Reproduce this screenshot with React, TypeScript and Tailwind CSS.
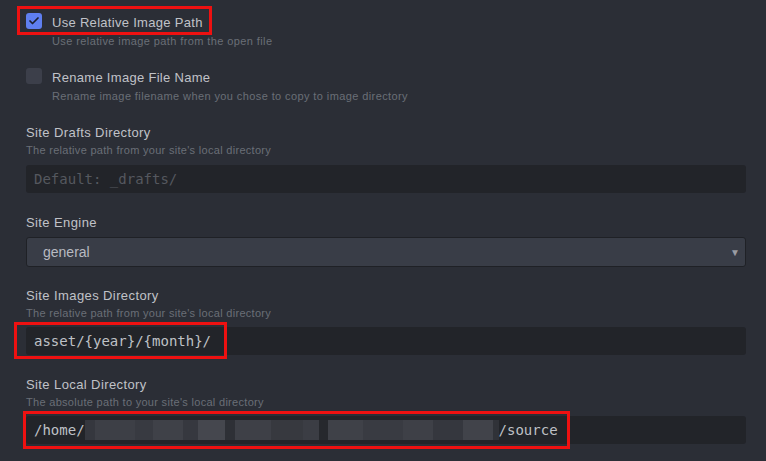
import { Check } from "lucide-react"

const sans = { fontFamily: '"Liberation Sans", Arial, sans-serif' }
const mono = { fontFamily: '"DejaVu Sans Mono", "Liberation Mono", monospace' }

const blurBlocks: [number, string][] = [
  [10, "#35373e"],
  [40, "#3d3f46"],
  [18, "#383a41"],
  [30, "#3f4148"],
  [15, "#36383f"],
  [27, "#45474e"],
  [10, "#2e3036"],
  [36, "#3e4047"],
  [32, "#37393f"],
  [16, "#3b3d44"],
  [9, "#26282d"],
  [35, "#3f4148"],
  [40, "#393b42"],
  [30, "#3e4047"],
  [30, "#35373e"],
  [30, "#41434a"],
  [6, "#303238"],
]

function CheckItem({ label, desc, checked }: { label: string; desc: string; checked?: boolean }) {
  return (
    <div className="flex">
      <div
        className={`mt-[-1px] flex h-4 w-4 shrink-0 items-center justify-center rounded-[3px] ${
          checked ? "bg-[#5f7ff0]" : "bg-[#3c3f4a]"
        }`}
      >
        {checked && <Check className="h-3 w-3 text-[#1c2030]" strokeWidth={3.5} />}
      </div>
      <div className="ml-[10px]">
        <div className="text-[13px] leading-[18px] tracking-[0.3px] text-[#c0c2c8]">{label}</div>
        <div className="text-[11px] leading-[18px] tracking-[0.4px] text-[#6a6e77]">{desc}</div>
      </div>
    </div>
  )
}

function FieldLabel({ title, desc }: { title: string; desc?: string }) {
  return (
    <>
      <div className="text-[13px] leading-[18px] tracking-[0.4px] text-[#c0c2c8]">{title}</div>
      {desc && <div className="text-[11px] leading-[17px] tracking-[0.3px] text-[#6a6e77]">{desc}</div>}
    </>
  )
}

export default function App() {
  return (
    <div className="relative h-[461px] w-[766px] overflow-hidden bg-[#2b2e36]" style={sans}>
      <div className="w-[746px] pl-[26px] pt-[14px]">
        {/* Checkbox options */}
        <CheckItem
          checked
          label="Use Relative Image Path"
          desc="Use relative image path from the open file"
        />
        <div className="mt-[19px]">
          <CheckItem
            label="Rename Image File Name"
            desc="Rename image filename when you chose to copy to image directory"
          />
        </div>

        {/* Site Drafts Directory */}
        <div className="mt-[19px]">
          <FieldLabel title="Site Drafts Directory" desc="The relative path from your site's local directory" />
          <div
            className="mt-[6px] flex h-7 items-center rounded-[3px] bg-[#222429] px-2 text-[14px] text-[#55585f]"
            style={mono}
          >
            Default: _drafts/
          </div>
        </div>

        {/* Site Engine */}
        <div className="mt-[21px]">
          <FieldLabel title="Site Engine" />
          <div className="mt-[5px] flex h-[30px] items-center justify-between rounded-[3px] border border-[#1f2126] bg-[#393d47] pl-4 pr-[5px]">
            <span className="text-[14px] text-[#b8bac1]">general</span>
            <span className="text-[10px] text-[#9a9ca3]">▼</span>
          </div>
        </div>

        {/* Site Images Directory */}
        <div className="mt-[20px]">
          <FieldLabel title="Site Images Directory" desc="The relative path from your site's local directory" />
          <div
            className="mt-[5px] flex h-7 items-center rounded-[3px] bg-[#222429] px-2 text-[14px] text-[#bfc1c6]"
            style={mono}
          >
            asset/{"{year}"}/{"{month}"}/
          </div>
        </div>

        {/* Site Local Directory */}
        <div className="mt-[21px]">
          <FieldLabel title="Site Local Directory" desc="The absolute path to your site's local directory" />
          <div
            className="mt-[5px] flex h-7 items-center rounded-[3px] bg-[#222429] px-2 text-[14px] text-[#bfc1c6]"
            style={mono}
          >
            <span>/home/</span>
            <span className="flex h-[20px]">
              {blurBlocks.map(([w, c], i) => (
                <span key={i} className="h-full" style={{ width: w, backgroundColor: c }} />
              ))}
            </span>
            <span>/source</span>
          </div>
        </div>
      </div>

      {/* annotation boxes */}
      <div className="absolute left-[17px] top-[6px] h-[29px] w-[195px] border-[3px] border-[#ee1111]" />
      <div className="absolute left-[14px] top-[322px] h-[37px] w-[213px] border-[3px] border-[#ee1111]" />
      <div className="absolute left-[23px] top-[411px] h-[38px] w-[547px] border-[3px] border-[#ee1111]" />
    </div>
  )
}
